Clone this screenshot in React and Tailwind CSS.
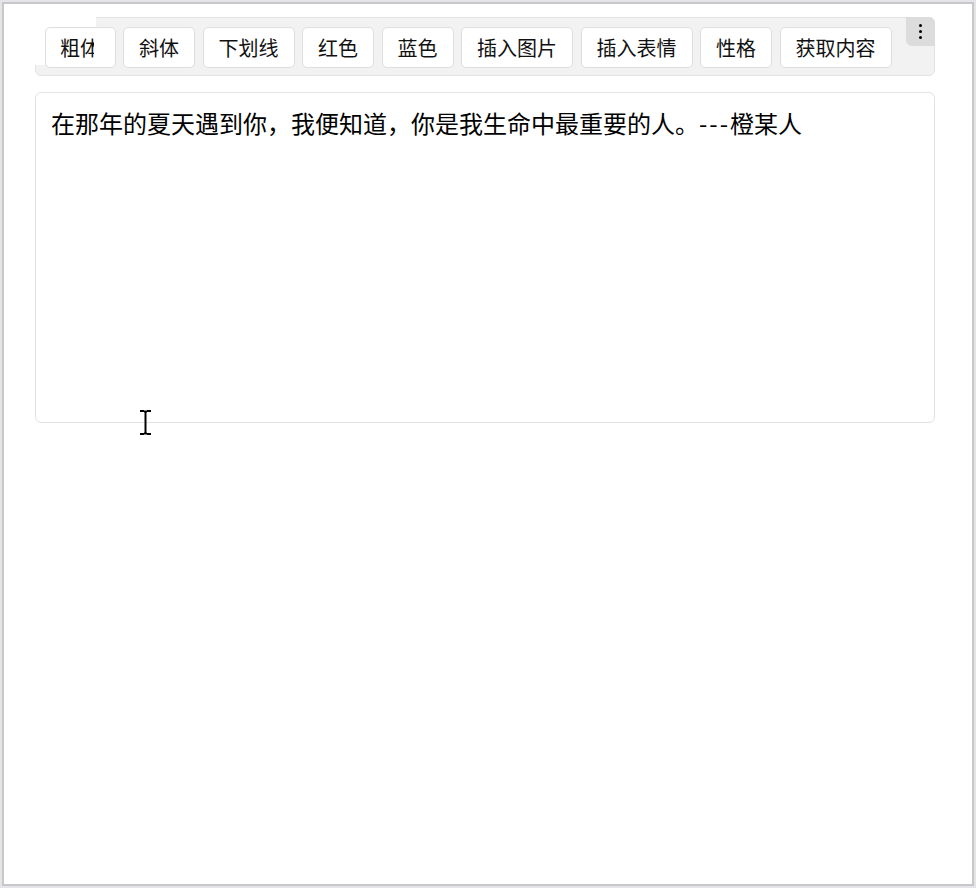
const BUTTONS = ['斜体', '下划线', '红色', '蓝色', '插入图片', '插入表情', '性格', '获取内容'];

const FONT = { fontFamily: '"Microsoft YaHei", "Noto Sans CJK SC", "Noto Sans", sans-serif' };

function ToolButton({ children }) {
  return (
    <button className="h-[41px] px-[15px] bg-white border border-[#dedede] rounded-[5px] text-[20px] leading-[27px] text-[#111]">
      {children}
    </button>
  );
}

export default function App() {
  return (
    <div className="h-screen w-full bg-[#e3e5e8] p-[2px]" style={FONT}>
      <div className="relative h-full border-2 border-[#c8c8c8] bg-white">
        <div className="ml-[31px] mt-[13px] w-[900px]">
          {/* 工具栏 */}
          <div className="relative flex gap-[7.5px] pl-[9px] pt-[9px] pb-[7px] bg-[#f2f2f2] border border-[#e2e2e2] rounded-md">
            {/* 左上角白色残影 */}
            <div className="absolute -left-px -top-px w-[61px] h-[48px] bg-white" />
            <button className="relative h-[41px] w-[70.5px] bg-white border border-[#dedede] rounded-[5px] text-[20px] leading-[27px] text-[#111] flex items-center pl-[14px]">
              <span className="block w-[34px] overflow-hidden whitespace-nowrap">粗体</span>
            </button>
            {BUTTONS.map(b => (
              <ToolButton key={b}>{b}</ToolButton>
            ))}
            <div className="absolute -top-px -right-px w-[29px] h-[29px] bg-[#dcdcdc] rounded-tr-md rounded-bl-md flex flex-col items-center justify-center gap-[3px]">
              <span className="w-[3px] h-[3px] rounded-full bg-black" />
              <span className="w-[3px] h-[3px] rounded-full bg-black" />
              <span className="w-[3px] h-[3px] rounded-full bg-black" />
            </div>
          </div>

          {/* 编辑区 */}
          <div className="mt-4 h-[331px] border border-[#e2e2e2] rounded-md px-[15px] pt-[12px] text-[24px] leading-[36px] text-black">
            在那年的夏天遇到你，我便知道，你是我生命中最重要的人。<span className="tracking-[2px]">---</span>橙某人
          </div>
        </div>

        {/* 文本光标 */}
        <svg className="absolute left-[135px] top-[406px]" width="13" height="25" viewBox="0 0 13 25">
          <path d="M1 1h4M8 1h4M6.5 1.5v22M1 24h4M8 24h4M5 1.5h3M5 23.5h3" stroke="#000" strokeWidth="2" fill="none" />
        </svg>
      </div>
    </div>
  );
}
